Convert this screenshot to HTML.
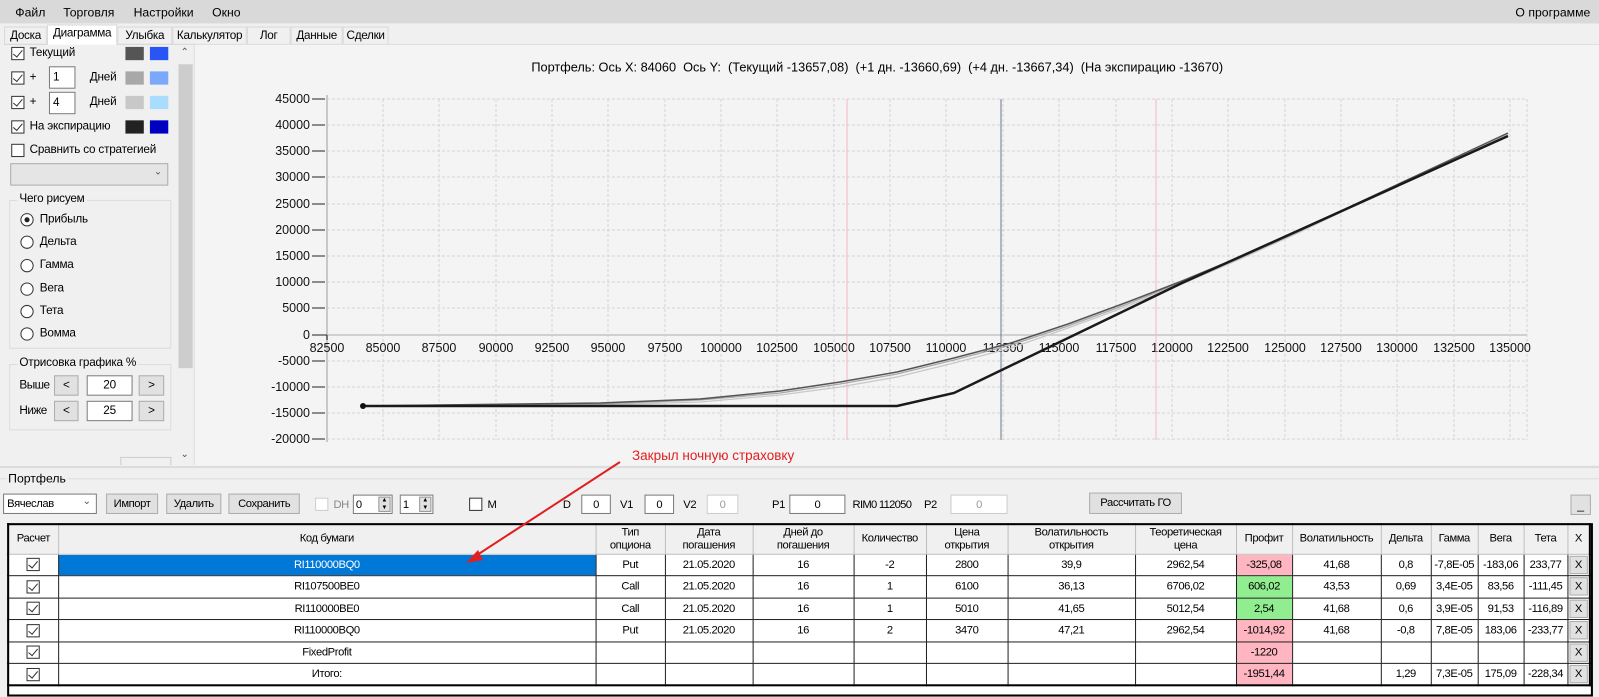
<!DOCTYPE html>
<html><head><meta charset="utf-8">
<style>
*{box-sizing:border-box;margin:0;padding:0}
body{width:1599px;height:693px;overflow:hidden;background:#f0f0f0;font-family:"Liberation Sans",sans-serif;font-size:12px;color:#000;position:relative}
#w{position:absolute;left:0;top:0;width:1568px;height:680px;transform:scale(1.0198);transform-origin:0 0}
.a{position:absolute;white-space:nowrap}
.lp{font-size:11.5px;letter-spacing:-0.2px}
.cb{position:absolute;width:13px;height:13px;border:1px solid #333;background:#fff}
.cb.on::after{content:"";position:absolute;left:3px;top:0px;width:4px;height:8px;border:solid #333;border-width:0 1px 1px 0;transform:rotate(40deg)}
.sw{position:absolute;width:18px;height:13px}
.rb{position:absolute;width:13px;height:13px;border:1px solid #333;border-radius:50%;background:#fff}
.rb.on::after{content:"";position:absolute;left:3px;top:3px;width:5px;height:5px;border-radius:50%;background:#222}
.box{position:absolute;border:1px solid #7a7a7a;background:#fff;text-align:center;line-height:18px}
.btn{position:absolute;border:1px solid #adadad;background:#e1e1e1;text-align:center;line-height:18px}
.grp{position:absolute;border:1px solid #dcdcdc}
.narrow{font-size:11px;letter-spacing:-0.4px}
.tab{position:absolute;top:26px;height:18px;border:1px solid #d9d9d9;font-size:11.5px;letter-spacing:-0.3px;padding:2px 0 0 0;text-align:center}
table{position:absolute;left:7px;top:513px;border-collapse:collapse;table-layout:fixed;width:1552px;font-size:11px;letter-spacing:-0.4px;background:#fff;border:2px solid #000}
td,th{border:1px solid #222;text-align:center;height:21.5px;padding:0;overflow:hidden;white-space:nowrap;font-weight:normal}
th{height:29px;background:#f0f0f0;border-color:#bdbdbd;line-height:13px}
.sel{background:#0078d7;color:#fff}
.pk{background:#ffb6c1}.gr{background:#90ee90}
.xb{display:inline-block;width:18px;height:18px;border:1px solid #adadad;background:#e1e1e1;line-height:16px}
.ck{display:inline-block;width:13px;height:13px;border:1px solid #333;position:relative;vertical-align:middle}
.ck::after{content:"";position:absolute;left:3px;top:0;width:4px;height:8px;border:solid #333;border-width:0 1px 1px 0;transform:rotate(40deg)}
</style></head><body>
<div id="w">
<div class="a" style="left:0;top:0;width:1568px;height:23px;background:#d9d9d9"></div>
<div class="a" style="left:15px;top:5px">Файл</div>
<div class="a" style="left:62px;top:5px">Торговля</div>
<div class="a" style="left:131px;top:5px">Настройки</div>
<div class="a" style="left:208px;top:5px">Окно</div>
<div class="a" style="left:1486px;top:5px">О программе</div>
<div class="a" style="left:4px;top:43px;width:378px;height:1px;background:#d9d9d9"></div>
<div class="tab" style="left:4px;width:42px">Доска</div>
<div class="tab" style="left:46px;top:24px;width:69px;height:20px;background:#fff;border-bottom:none;padding-top:2px">Диаграмма</div>
<div class="tab" style="left:115px;width:54px">Улыбка</div>
<div class="tab" style="left:169px;width:73px">Калькулятор</div>
<div class="tab" style="left:242px;width:43px">Лог</div>
<div class="tab" style="left:285px;width:51px">Данные</div>
<div class="tab" style="left:336px;width:45px">Сделки</div>
<div class="lp">
<div class="cb on" style="left:11px;top:46px"></div><div class="a" style="left:29px;top:46px">Текущий</div>
<div class="sw" style="left:123px;top:46px;background:#555"></div><div class="sw" style="left:147px;top:46px;background:#2a55f5"></div>
<div class="cb on" style="left:11px;top:70px"></div><div class="a" style="left:29px;top:70px">+</div>
<div class="box" style="left:48px;top:65px;width:26px;height:22px;text-align:left;padding-left:3px;line-height:20px">1</div>
<div class="a" style="left:88px;top:70px">Дней</div>
<div class="sw" style="left:123px;top:70px;background:#a8a8a8"></div><div class="sw" style="left:147px;top:70px;background:#7aa8fb"></div>
<div class="cb on" style="left:11px;top:94px"></div><div class="a" style="left:29px;top:94px">+</div>
<div class="box" style="left:48px;top:90px;width:26px;height:22px;text-align:left;padding-left:3px;line-height:20px">4</div>
<div class="a" style="left:88px;top:94px">Дней</div>
<div class="sw" style="left:123px;top:94px;background:#c8c8c8"></div><div class="sw" style="left:147px;top:94px;background:#aadcfd"></div>
<div class="cb on" style="left:11px;top:118px"></div><div class="a" style="left:29px;top:118px">На экспирацию</div>
<div class="sw" style="left:123px;top:118px;background:#222"></div><div class="sw" style="left:147px;top:118px;background:#0000c0"></div>
<div class="cb" style="left:11px;top:141px"></div><div class="a" style="left:29px;top:141px">Сравнить со стратегией</div>
<div class="a" style="left:10px;top:160px;width:155px;height:22px;background:#e5e5e5;border:1px solid #adadad"><span style="position:absolute;right:5px;top:2px;color:#555;font-size:10px">&#8964;</span></div>
<div class="grp" style="left:9px;top:196px;width:159px;height:146px"></div>
<div class="a" style="left:17px;top:189px;background:#f0f0f0;padding:0 2px">Чего рисуем</div>
<div class="rb on" style="left:20px;top:209px"></div><div class="a" style="left:39px;top:209px">Прибыль</div>
<div class="rb" style="left:20px;top:231px"></div><div class="a" style="left:39px;top:231px">Дельта</div>
<div class="rb" style="left:20px;top:254px"></div><div class="a" style="left:39px;top:254px">Гамма</div>
<div class="rb" style="left:20px;top:277px"></div><div class="a" style="left:39px;top:277px">Вега</div>
<div class="rb" style="left:20px;top:299px"></div><div class="a" style="left:39px;top:299px">Тета</div>
<div class="rb" style="left:20px;top:321px"></div><div class="a" style="left:39px;top:321px">Вомма</div>
<div class="grp" style="left:9px;top:357px;width:159px;height:65px"></div>
<div class="a" style="left:17px;top:350px;background:#f0f0f0;padding:0 2px">Отрисовка графика %</div>
<div class="a" style="left:19px;top:372px;letter-spacing:-0.5px">Выше</div>
<div class="btn" style="left:53px;top:368px;width:24px;height:20px">&lt;</div>
<div class="box" style="left:85px;top:368px;width:45px;height:20px">20</div>
<div class="btn" style="left:136px;top:368px;width:25px;height:20px">&gt;</div>
<div class="a" style="left:19px;top:397px;letter-spacing:-0.5px">Ниже</div>
<div class="btn" style="left:53px;top:393px;width:24px;height:20px">&lt;</div>
<div class="box" style="left:85px;top:393px;width:45px;height:20px">25</div>
<div class="btn" style="left:136px;top:393px;width:25px;height:20px">&gt;</div>
</div>
<div class="a" style="left:118px;top:448px;width:50px;height:8px;border:1px solid #ccc;border-bottom:none"></div>
<div class="a" style="left:174px;top:44px;width:15px;height:412px;background:#f0f0f0"></div>
<div class="a" style="left:177px;top:46px;color:#555;font-size:10px">&#8963;</div>
<div class="a" style="left:175px;top:63px;width:14px;height:298px;background:#cdcdcd"></div>
<div class="a" style="left:177px;top:440px;color:#555;font-size:10px">&#8964;</div>
<div class="a" style="left:190px;top:43px;width:1378px;height:413px;background:#f4f4f4;border-top:1px solid #dedede;border-left:1px solid #dedede"></div>
<div class="a" style="left:521px;top:59px;font-size:12.5px">Портфель: Ось X: 84060&nbsp; Ось Y:&nbsp; (Текущий -13657,08)&nbsp; (+1 дн. -13660,69)&nbsp; (+4 дн. -13667,34)&nbsp; (На экспирацию -13670)</div>
<div class="a" style="left:0;top:457px;width:1568px;height:2px;background:#dcdcdc"></div>
<div class="a" style="left:0;top:469px;width:1568px;height:1px;background:#dcdcdc"></div>
<div class="a" style="left:6px;top:462px;background:#f0f0f0;padding:0 2px">Портфель</div>
<div class="a narrow" style="left:3px;top:484px;width:92px;height:20px;background:#fff;border:1px solid #7a7a7a;padding:3px 3px">Вячеслав<span style="position:absolute;right:5px;top:1px;color:#555;font-size:10px">&#8964;</span></div>
<div class="btn narrow" style="left:104px;top:484px;width:51px;height:20px">Импорт</div>
<div class="btn narrow" style="left:163px;top:484px;width:54px;height:20px">Удалить</div>
<div class="btn narrow" style="left:224px;top:484px;width:70px;height:20px">Сохранить</div>
<div class="cb" style="left:309px;top:488px;border-color:#ccc"></div><div class="a narrow" style="left:327px;top:489px;color:#888">DH</div>
<div class="box narrow" style="left:346px;top:485px;width:39px;height:19px;text-align:left;padding-left:2px">0</div>
<div class="a" style="left:371px;top:487px;width:12px;height:15px;border:1px solid #999;background:#e1e1e1;font-size:6px;line-height:7px;text-align:center">▲<br>▼</div>
<div class="box narrow" style="left:392px;top:485px;width:33px;height:19px;text-align:left;padding-left:2px">1</div>
<div class="a" style="left:411px;top:487px;width:12px;height:15px;border:1px solid #999;background:#e1e1e1;font-size:6px;line-height:7px;text-align:center">▲<br>▼</div>
<div class="cb" style="left:460px;top:488px"></div><div class="a narrow" style="left:478px;top:489px">M</div>
<div class="a narrow" style="left:552px;top:489px">D</div><div class="box narrow" style="left:570px;top:485px;width:29px;height:19px">0</div>
<div class="a narrow" style="left:608px;top:489px">V1</div><div class="box narrow" style="left:632px;top:485px;width:29px;height:19px">0</div>
<div class="a narrow" style="left:670px;top:489px">V2</div><div class="box narrow" style="left:693px;top:485px;width:31px;height:19px;border-color:#ccc;color:#999">0</div>
<div class="a narrow" style="left:757px;top:489px">P1</div><div class="box narrow" style="left:774px;top:485px;width:55px;height:19px">0</div>
<div class="a narrow" style="left:836px;top:489px;letter-spacing:-0.7px">RIM0 112050</div>
<div class="a narrow" style="left:906px;top:489px">P2</div><div class="box narrow" style="left:932px;top:485px;width:56px;height:19px;border-color:#ccc;color:#999">0</div>
<div class="btn narrow" style="left:1068px;top:483px;width:91px;height:21px">Рассчитать ГО</div>
<div class="btn" style="left:1540px;top:485px;width:20px;height:20px">_</div>
<div class="a" style="left:7px;top:513px;width:1555px;height:170px;background:#fff;border:2px solid #000"></div>
<table>
<colgroup><col style="width:49px"><col style="width:527px"><col style="width:68px"><col style="width:86px"><col style="width:99px"><col style="width:71px"><col style="width:80px"><col style="width:125px"><col style="width:99px"><col style="width:55px"><col style="width:87px"><col style="width:49px"><col style="width:46px"><col style="width:45px"><col style="width:43px"><col style="width:22px"></colgroup>
<tr><th>Расчет</th><th>Код бумаги</th><th>Тип<br>опциона</th><th>Дата<br>погашения</th><th>Дней до<br>погашения</th><th>Количество</th><th>Цена<br>открытия</th><th>Волатильность<br>открытия</th><th>Теоретическая<br>цена</th><th>Профит</th><th>Волатильность</th><th>Дельта</th><th>Гамма</th><th>Вега</th><th>Тета</th><th>X</th></tr>
<tr><td><span class="ck"></span></td><td class="sel">RI110000BQ0</td><td>Put</td><td>21.05.2020</td><td>16</td><td>-2</td><td>2800</td><td>39,9</td><td>2962,54</td><td class="pk">-325,08</td><td>41,68</td><td>0,8</td><td>-7,8E-05</td><td>-183,06</td><td>233,77</td><td><span class="xb">X</span></td></tr>
<tr><td><span class="ck"></span></td><td>RI107500BE0</td><td>Call</td><td>21.05.2020</td><td>16</td><td>1</td><td>6100</td><td>36,13</td><td>6706,02</td><td class="gr">606,02</td><td>43,53</td><td>0,69</td><td>3,4E-05</td><td>83,56</td><td>-111,45</td><td><span class="xb">X</span></td></tr>
<tr><td><span class="ck"></span></td><td>RI110000BE0</td><td>Call</td><td>21.05.2020</td><td>16</td><td>1</td><td>5010</td><td>41,65</td><td>5012,54</td><td class="gr">2,54</td><td>41,68</td><td>0,6</td><td>3,9E-05</td><td>91,53</td><td>-116,89</td><td><span class="xb">X</span></td></tr>
<tr><td><span class="ck"></span></td><td>RI110000BQ0</td><td>Put</td><td>21.05.2020</td><td>16</td><td>2</td><td>3470</td><td>47,21</td><td>2962,54</td><td class="pk">-1014,92</td><td>41,68</td><td>-0,8</td><td>7,8E-05</td><td>183,06</td><td>-233,77</td><td><span class="xb">X</span></td></tr>
<tr><td><span class="ck"></span></td><td>FixedProfit</td><td></td><td></td><td></td><td></td><td></td><td></td><td></td><td class="pk">-1220</td><td></td><td></td><td></td><td></td><td></td><td><span class="xb">X</span></td></tr>
<tr><td><span class="ck"></span></td><td>Итого:</td><td></td><td></td><td></td><td></td><td></td><td></td><td></td><td class="pk">-1951,44</td><td></td><td>1,29</td><td>7,3E-05</td><td>175,09</td><td>-228,34</td><td><span class="xb">X</span></td></tr>
</table>
</div>
<svg style="position:absolute;left:0;top:0" width="1599" height="693" font-family="Liberation Sans, sans-serif" font-size="12.5">
<g stroke="#d4d4d4" stroke-dasharray="3,2" stroke-width="1">
<line x1="327" y1="99" x2="1527" y2="99"/><line x1="327" y1="125" x2="1527" y2="125"/><line x1="327" y1="151" x2="1527" y2="151"/><line x1="327" y1="177" x2="1527" y2="177"/><line x1="327" y1="204" x2="1527" y2="204"/><line x1="327" y1="230" x2="1527" y2="230"/><line x1="327" y1="256" x2="1527" y2="256"/><line x1="327" y1="282" x2="1527" y2="282"/><line x1="327" y1="308" x2="1527" y2="308"/><line x1="327" y1="361" x2="1527" y2="361"/><line x1="327" y1="387" x2="1527" y2="387"/><line x1="327" y1="413" x2="1527" y2="413"/><line x1="327" y1="439" x2="1527" y2="439"/>
<line x1="383" y1="99" x2="383" y2="440"/><line x1="439" y1="99" x2="439" y2="440"/><line x1="496" y1="99" x2="496" y2="440"/><line x1="552" y1="99" x2="552" y2="440"/><line x1="608" y1="99" x2="608" y2="440"/><line x1="665" y1="99" x2="665" y2="440"/><line x1="721" y1="99" x2="721" y2="440"/><line x1="777" y1="99" x2="777" y2="440"/><line x1="834" y1="99" x2="834" y2="440"/><line x1="890" y1="99" x2="890" y2="440"/><line x1="946" y1="99" x2="946" y2="440"/><line x1="1003" y1="99" x2="1003" y2="440"/><line x1="1059" y1="99" x2="1059" y2="440"/><line x1="1116" y1="99" x2="1116" y2="440"/><line x1="1172" y1="99" x2="1172" y2="440"/><line x1="1228" y1="99" x2="1228" y2="440"/><line x1="1285" y1="99" x2="1285" y2="440"/><line x1="1341" y1="99" x2="1341" y2="440"/><line x1="1397" y1="99" x2="1397" y2="440"/><line x1="1454" y1="99" x2="1454" y2="440"/><line x1="1510" y1="99" x2="1510" y2="440"/><line x1="1527" y1="99" x2="1527" y2="440"/>
</g>
<line x1="327" y1="335" x2="1527" y2="335" stroke="#d0d0d0" stroke-width="2"/>
<line x1="327" y1="95" x2="327" y2="442" stroke="#c8c8c8" stroke-width="2"/>
<g stroke="#222"><line x1="312" y1="99" x2="325" y2="99"/><line x1="312" y1="125" x2="325" y2="125"/><line x1="312" y1="151" x2="325" y2="151"/><line x1="312" y1="177" x2="325" y2="177"/><line x1="312" y1="204" x2="325" y2="204"/><line x1="312" y1="230" x2="325" y2="230"/><line x1="312" y1="256" x2="325" y2="256"/><line x1="312" y1="282" x2="325" y2="282"/><line x1="312" y1="308" x2="325" y2="308"/><line x1="312" y1="335" x2="327" y2="335"/><line x1="327" y1="335" x2="327" y2="340"/><line x1="312" y1="361" x2="325" y2="361"/><line x1="312" y1="387" x2="325" y2="387"/><line x1="312" y1="413" x2="325" y2="413"/><line x1="312" y1="439" x2="325" y2="439"/></g>
<g text-anchor="end" fill="#111"><text x="310" y="103">45000</text><text x="310" y="129">40000</text><text x="310" y="155">35000</text><text x="310" y="181">30000</text><text x="310" y="208">25000</text><text x="310" y="234">20000</text><text x="310" y="260">15000</text><text x="310" y="286">10000</text><text x="310" y="312">5000</text><text x="310" y="339">0</text><text x="310" y="365">-5000</text><text x="310" y="391">-10000</text><text x="310" y="417">-15000</text><text x="310" y="443">-20000</text></g>
<g text-anchor="middle" fill="#111"><text x="327" y="352">82500</text><text x="383" y="352">85000</text><text x="439" y="352">87500</text><text x="496" y="352">90000</text><text x="552" y="352">92500</text><text x="608" y="352">95000</text><text x="665" y="352">97500</text><text x="721" y="352">100000</text><text x="777" y="352">102500</text><text x="834" y="352">105000</text><text x="890" y="352">107500</text><text x="946" y="352">110000</text><text x="1003" y="352">112500</text><text x="1059" y="352">115000</text><text x="1116" y="352">117500</text><text x="1172" y="352">120000</text><text x="1228" y="352">122500</text><text x="1285" y="352">125000</text><text x="1341" y="352">127500</text><text x="1397" y="352">130000</text><text x="1454" y="352">132500</text><text x="1510" y="352">135000</text></g>
<line x1="847" y1="99" x2="847" y2="440" stroke="#f4b8c0"/>
<line x1="1156" y1="99" x2="1156" y2="440" stroke="#f4b8c0"/>
<line x1="1001" y1="99" x2="1001" y2="440" stroke="#6a7888"/>
<polyline fill="none" stroke="#c8c8c8" stroke-width="1.3" points="363,406 600,405 700,402 780,395 840,387 897,377 954,363 1011,348 1068,328 1125,307 1182,284 1240,259 1300,232 1360,203 1420,175 1508,134"/>
<polyline fill="none" stroke="#a8a8a8" stroke-width="1.3" points="363,406 600,404 700,400 780,393 840,384 897,374 954,360 1011,345 1068,326 1125,305 1182,282 1240,258 1300,231 1360,202 1420,174 1508,133"/>
<polyline fill="none" stroke="#555" stroke-width="1.5" points="363,406 600,403 700,399 780,391 840,382 897,372 954,358 1011,343 1068,324 1125,303 1182,281 1240,257 1300,230 1360,202 1420,174 1508,133"/>
<polyline fill="none" stroke="#1a1a1a" stroke-width="2.5" points="363,406 897,406 954,393 1182,283 1508,136"/>
<circle cx="363" cy="406" r="3" fill="#111"/>
<text x="632" y="460" fill="#e02020" font-size="13.5">Закрыл ночную страховку</text>
<line x1="620" y1="462" x2="474" y2="557" stroke="#e02020" stroke-width="2"/>
<polygon points="466,563 478,550 483,560" fill="#e02020"/>
</svg>
</body></html>
